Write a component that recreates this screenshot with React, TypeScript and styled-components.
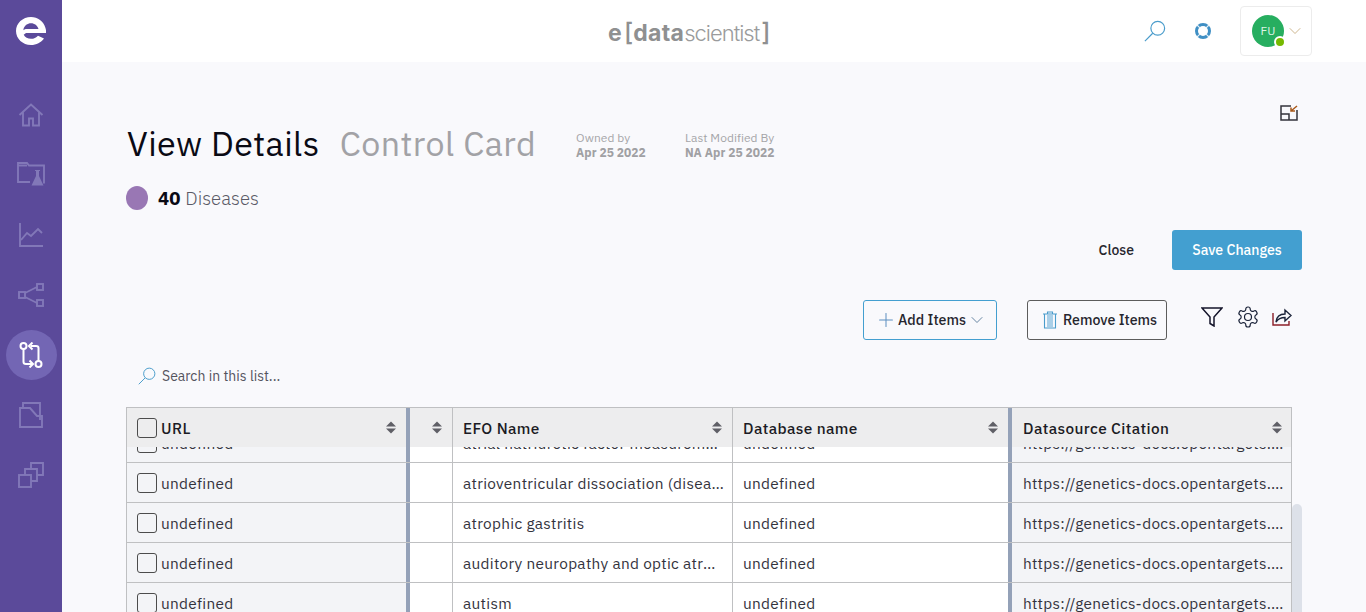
import React from 'react'
import styled, {createGlobalStyle} from 'styled-components'
import {ChevronDown, Plus} from 'lucide-react'

const font = `"IBM Plex Sans", Roboto, "Liberation Sans", sans-serif`

const GlobalStyle = createGlobalStyle`
  html, body {
    margin: 0;
    height: 100%;
    overflow: hidden;
    background: #f9f9fc;
    font-family: ${font};
  }
  * { box-sizing: border-box; }
`

const Shell = styled.div`
  display: flex;
  width: 1366px;
  height: 612px;
  overflow: hidden;
`

const Sidebar = styled.nav`
  width: 62px;
  flex: none;
  background: #5b4a9a;
  display: flex;
  flex-direction: column;
  align-items: center;
`

const LogoSlot = styled.div`
  height: 62px;
  width: 100%;
  display: flex;
  align-items: center;
  justify-content: center;
`

const NavList = styled.div`
  display: flex;
  flex-direction: column;
  align-items: center;
  gap: 10px;
  padding-top: 28px;
`

const NavItem = styled.div<{$active?: boolean}>`
  width: 51px;
  height: 50px;
  border-radius: 50%;
  display: flex;
  align-items: center;
  justify-content: center;
  background: ${p => (p.$active ? '#7366b4' : 'transparent')};
  color: ${p => (p.$active ? '#ffffff' : '#8278b8')};
`

const Content = styled.div`
  flex: 1;
  min-width: 0;
  display: flex;
  flex-direction: column;
`

const Header = styled.header`
  height: 62px;
  flex: none;
  background: #ffffff;
  display: flex;
  align-items: center;
  position: relative;
  padding-right: 54px;
  justify-content: flex-end;
`

const Brand = styled.div`
  position: absolute;
  left: 546px;
  top: 17px;
  display: flex;
  align-items: baseline;
  font-family: Inter, "Liberation Sans", sans-serif;
  font-size: 23px;
  line-height: 30px;
  color: #8f9091;
  white-space: nowrap;
`

const BrandBold = styled.span`
  font-weight: 700;
  letter-spacing: 0.3px;
`

const BrandBracket = styled.span`
  font-weight: 500;
  font-size: 25px;
  margin: 0 0 0 2px;
`

const BrandLight = styled.span`
  font-weight: 300;
  font-size: 22px;
  color: #9a9b9c;
  letter-spacing: -1px;
`

const HeaderIcon = styled.div<{$mr: number}>`
  display: flex;
  margin-right: ${p => p.$mr}px;
`

const UserBox = styled.div`
  width: 72px;
  height: 50px;
  margin-top: -1px;
  border: 1px solid #ececec;
  border-radius: 4px;
  display: flex;
  align-items: center;
  padding-left: 11px;
  color: #c4a878;
`

const Avatar = styled.div`
  position: relative;
  width: 32px;
  height: 32px;
  border-radius: 50%;
  background: #27ae60;
  color: #dff3e7;
  font-size: 12px;
  margin-right: 1px;
  display: flex;
  align-items: center;
  justify-content: center;
`

const Presence = styled.span`
  position: absolute;
  right: -2px;
  bottom: -1px;
  width: 12px;
  height: 12px;
  border-radius: 50%;
  background: #76b900;
  border: 2px solid #ffffff;
`

const Main = styled.main`
  flex: 1;
  min-height: 0;
  display: flex;
  flex-direction: column;
  padding: 0 64px 0 64px;
`

const ExpandRow = styled.div`
  display: flex;
  justify-content: flex-end;
  padding: 43px 4px 0 0;
  height: 60px;
`

const TitleRow = styled.div`
  display: flex;
  align-items: center;
  height: 42px;
  padding-left: 1px;
`

const Title = styled.h1`
  margin: 0;
  font-size: 34px;
  font-weight: 400;
  line-height: 42px;
  color: #0a0a14;
  letter-spacing: 0.42px;
`

const SubTitle = styled(Title)`
  margin-left: 20px;
  color: #a2a2a6;
`

const Meta = styled.div<{$ml: number}>`
  margin-left: ${p => p.$ml}px;
  padding-top: 4px;
  font-size: 12px;
  line-height: 15px;
  color: #a5a5a8;
  letter-spacing: 0.05px;
`

const MetaValue = styled.div`
  font-weight: 700;
  color: #a0a0a3;
`

const CountRow = styled.div`
  display: flex;
  align-items: center;
  margin-top: 22px;
  height: 24px;
  font-size: 18.6px;
  color: #5a5a66;
  font-weight: 300;
`

const Dot = styled.span`
  width: 22px;
  height: 24px;
  border-radius: 50%;
  background: #9977b4;
  margin-right: 10px;
`

const CountNumber = styled.b`
  color: #0a0a14;
  font-weight: 700;
  margin-right: 5px;
`

const ActionRow = styled.div`
  display: flex;
  justify-content: flex-end;
  align-items: center;
  margin-top: 20px;
  height: 40px;
`

const CloseButton = styled.button`
  border: 0;
  background: none;
  font: 500 14px ${font};
  color: #26262e;
  margin-right: 38px;
  padding: 0;
`

const SaveButton = styled.button`
  width: 130px;
  height: 40px;
  border: 0;
  border-radius: 3px;
  background: #439fd0;
  color: #ffffff;
  padding: 0 0 1px;
  font: 500 14.1px ${font};
`

const ToolRow = styled.div`
  display: flex;
  align-items: center;
  margin-top: 30px;
  height: 40px;
  padding-right: 10px;
`

const OutlineButton = styled.button<{$blue?: boolean; $w: number; $ml?: number; $gap: number; $pl: number}>`
  width: ${p => p.$w}px;
  height: 40px;
  margin-left: ${p => p.$ml ?? 0}px;
  border: 1px solid ${p => (p.$blue ? '#439fd0' : '#5c5c5c')};
  border-radius: 3px;
  background: none;
  display: flex;
  align-items: center;
  gap: ${p => p.$gap}px;
  font: 500 14.2px ${font};
  color: #26262e;
  padding: 0 0 1px ${p => p.$pl}px;
`

const ToolSpacer = styled.div`
  flex: 1;
`

const ToolIcons = styled.div`
  display: flex;
  align-items: center;
  margin: -6px 0 0 34px;
  gap: 12.5px;
`

const SearchRow = styled.div`
  display: flex;
  align-items: center;
  gap: 6px;
  margin-top: 27px;
  height: 18px;
  padding-left: 12px;
  font-size: 14px;
  color: #54545e;
`

const TableWrap = styled.div`
  display: flex;
  margin-top: 22px;
  flex: 1;
  min-height: 0;
`

const Table = styled.div`
  width: 1166px;
  flex: none;
  border-top: 1px solid #bfc0c2;
  border-left: 1px solid #bfc0c2;
  border-right: 1px solid #bfc0c2;
  overflow: hidden;
  position: relative;
`

const Row = styled.div`
  display: grid;
  grid-template-columns: 283px 43px 280px 279px 279px;
  height: 40px;
  border-bottom: 1px solid #bfc0c2;
`

const HeaderRow = styled(Row)`
  height: 39px;
  border-bottom: 0;
  position: relative;
  z-index: 2;
`

const Body = styled.div`
  margin-top: -24px;
`

const Cell = styled.div<{$frozen?: 'left' | 'right'; $head?: boolean}>`
  display: flex;
  align-items: center;
  min-width: 0;
  padding: 0 ${p => (p.$head ? 9 : 8)}px 0 10px;
  font-size: 15.4px;
  font-weight: ${p => (p.$head ? 500 : 400)};
  color: ${p => (p.$head ? '#1b1b24' : '#33333d')};
  letter-spacing: ${p => (p.$head ? 0.38 : 0.3)}px;
  background: ${p => (p.$head ? '#ededee' : p.$frozen ? '#f3f4f7' : '#ffffff')};
  border-right: ${p => (p.$frozen === 'left' ? '4px solid #94a1b8' : p.$frozen === 'right' ? '0' : '1px solid #bfc0c2')};
  ${p => p.$frozen === 'right' && `padding: 0 ${p.$head ? 8 : 5}px 0 11px;`}
`

const DbCell = styled(Cell)`
  border-right: 4px solid #94a1b8;
`

const CellText = styled.span`
  flex: 1;
  min-width: 0;
  white-space: nowrap;
  overflow: hidden;
  text-overflow: ellipsis;
`

const Box = styled.span`
  width: 20px;
  height: 20px;
  flex: none;
  border: 1px solid #4c4c4c;
  border-radius: 3px;
  margin-right: 4px;
`

const SortGlyph = styled.svg`
  flex: none;
  margin-top: -1px;
`

const Scrollbar = styled.div`
  width: 10px;
  flex: none;
  padding-top: 97px;
`

const Thumb = styled.div`
  height: 120px;
  background: #dde1e9;
  border-radius: 5px 5px 0 0;
`

const SortIcon = () => (
  <SortGlyph width="12" height="13" viewBox="0 0 12 13" fill="#5f5f66">
    <path d="M6 0.5 11 5.5H1Z" />
    <path d="M1 7.5H11L6 12.5Z" />
  </SortGlyph>
)

// white disc with the half moon counter and the open notch on the right
const Logo = () => (
  <svg width="30" height="28" viewBox="0 0 30 28">
    <path
      fill="#fff"
      fillRule="evenodd"
      d="M15 0C6.700 0 0 6.300 0 14s6.700 14 15 14c5.500 0 10-2.400 13-6.500l-6-2.800c-1.700 2-4.200 3.100-7 3.100-3.200 0-6-1.600-7.300-4.100l2.300-1.700H30c.2-1.900 0-3.900-.7-5.600C27.500 4.300 21.800 0 15 0ZM7.500 12C8.400 8.700 11.400 6.300 15 6.300s6.600 2.400 7.500 5.700H11c-1.600 0-2.700.400-3.500 1.200Z"
    />
  </svg>
)

const stroke = {fill: 'none', stroke: 'currentColor', strokeWidth: 1.9}

const HomeIcon = () => (
  <svg width="26" height="24" viewBox="0 0 26 24" {...stroke}>
    <path d="M1.500 12 13 1.500 24.500 12M5 9v13.500h6v-7h4v7h6V9" />
  </svg>
)

const FolderIcon = () => (
  <svg width="28" height="26" viewBox="0 0 28 26" {...stroke}>
    <path d="M13 20H1V1h9l2 2.500h15v18" />
    <path d="M1 3.500h9" />
    <path fill="currentColor" stroke="none" d="M18 8h5v1h-1v5l4.500 9.500h-12L19 14V9h-1Z" />
  </svg>
)

const ChartIcon = () => (
  <svg width="24" height="24" viewBox="0 0 24 24" {...stroke}>
    <path d="M1 0v23h23" />
    <path d="m2 17 6-7 4 3 7-7 4 4" />
  </svg>
)

const NetworkIcon = () => (
  <svg width="26" height="24" viewBox="0 0 26 24" {...stroke}>
    <rect x="1" y="9" width="6" height="6" />
    <rect x="19" y="1" width="6" height="6" />
    <rect x="19" y="17" width="6" height="6" />
    <path d="m7 10 12-6M7 14l12 6" />
  </svg>
)

const CompareIcon = () => (
  <svg width="24" height="26" viewBox="0 0 24 26" fill="none" stroke="#fff" strokeWidth="2">
    <circle cx="4.500" cy="4" r="3" />
    <circle cx="19.500" cy="22" r="3" />
    <path d="M4.500 7v13c0 1.500 1 2 2.500 2h6M10.500 18.500 14 22l-3.500 3.500" />
    <path d="M19.500 19V6c0-1.500-1-2-2.500-2h-5M13.500.5 10 4l3.500 3.500" />
  </svg>
)

const CardsIcon = () => (
  <svg width="24" height="26" viewBox="0 0 24 26" {...stroke}>
    <path d="M4 6V1h17v17" />
    <path d="M1 25V6h10l7 8h5v11Z" />
  </svg>
)

const LayersIcon = () => (
  <svg width="26" height="26" viewBox="0 0 26 26" {...stroke}>
    <rect x="1" y="13" width="12" height="12" />
    <path d="M7 13V7h12v12h-6" />
    <path d="M13 7V1h12v12h-6" />
  </svg>
)

const ExpandIcon = () => (
  <svg width="18" height="16" viewBox="0 0 18 16" fill="none" stroke="#33333b" strokeWidth="1.500">
    <path d="M11 1H1v14h16V5" />
    <path d="M1 9h8v6" />
    <path d="M17 1l-6 5M11 2.500V6h4" stroke="#a8591a" />
  </svg>
)

const MagnifierIcon = ({size}: {size: number}) => (
  <svg width={size} height={size} viewBox="0 0 24 24" fill="none" stroke="#4a9ccb" strokeWidth="1.300">
    <circle cx="15" cy="9" r="7.500" />
    <path d="M9.500 14.500 1 23" />
  </svg>
)

const BuoyIcon = () => (
  <svg width="18" height="18" viewBox="0 0 18 18" fill="none">
    <circle cx="9" cy="9" r="6.500" stroke="#3f8fc4" strokeWidth="3" />
    <path d="m3 3 3.200 3.200M15 3l-3.200 3.200M3 15l3.200-3.200M15 15l-3.200-3.200" stroke="#e6f1f8" strokeWidth="1.200" />
  </svg>
)

const TrashIcon = () => (
  <svg width="16" height="18" viewBox="0 0 16 18" fill="none" stroke="#4a9ccb" strokeWidth="1.100">
    <rect x="5" y="4" width="6" height="12" fill="#a9cfe8" stroke="none" />
    <path d="M1 3h14M5.500 3V1h5v2M2.500 3v14h11V3" />
  </svg>
)

const FunnelIcon = () => (
  <svg width="22" height="20" viewBox="0 0 22 20" fill="none" stroke="#14142a" strokeWidth="1.500">
    <path d="M1 1h20l-8 9v9l-4-2.500V10Z" />
  </svg>
)

const GearIcon = () => (
  <svg width="24" height="24" viewBox="0 0 24 24" fill="none" stroke="#1a2238" strokeWidth="1.200">
    <path d="M12.220 2h-.44a2 2 0 0 0-2 2v.18a2 2 0 0 1-1 1.730l-.43.250a2 2 0 0 1-2 0l-.150-.080a2 2 0 0 0-2.730.730l-.220.380a2 2 0 0 0 .730 2.730l.150.100a2 2 0 0 1 1 1.720v.510a2 2 0 0 1-1 1.740l-.150.090a2 2 0 0 0-.730 2.730l.220.380a2 2 0 0 0 2.730.730l.150-.080a2 2 0 0 1 2 0l.430.250a2 2 0 0 1 1 1.730V20a2 2 0 0 0 2 2h.44a2 2 0 0 0 2-2v-.18a2 2 0 0 1 1-1.730l.430-.250a2 2 0 0 1 2 0l.150.080a2 2 0 0 0 2.730-.730l.220-.390a2 2 0 0 0-.730-2.730l-.150-.080a2 2 0 0 1-1-1.740v-.500a2 2 0 0 1 1-1.740l.150-.090a2 2 0 0 0 .730-2.730l-.220-.380a2 2 0 0 0-2.730-.730l-.150.080a2 2 0 0 1-2 0l-.430-.250a2 2 0 0 1-1-1.730V4a2 2 0 0 0-2-2z" />
    <circle cx="12" cy="12" r="3.500" />
  </svg>
)

const ShareIcon = () => (
  <svg width="20" height="20" viewBox="0 0 20 20" fill="none" strokeWidth="1.400">
    <path d="M1 6v12h16v-4" stroke="#8c1f28" />
    <path d="M4 15c.5-5 4-8 9-8V3l6 5.500L13 14v-3.500c-4 0-7 1.500-9 4.500Z" stroke="#1a2238" />
  </svg>
)

const rows = [
  ['atrial natriuretic factor measurement'],
  ['atrioventricular dissociation (disease)'],
  ['atrophic gastritis'],
  ['auditory neuropathy and optic atrophy'],
  ['autism'],
]

const citation = 'https://genetics-docs.opentargets.org/our-approach'

const App = () => {
    return (
      <Shell>
          <GlobalStyle />
          <Sidebar>
              <LogoSlot><Logo /></LogoSlot>
              <NavList>
                  <NavItem><HomeIcon /></NavItem>
                  <NavItem><FolderIcon /></NavItem>
                  <NavItem><ChartIcon /></NavItem>
                  <NavItem><NetworkIcon /></NavItem>
                  <NavItem $active><CompareIcon /></NavItem>
                  <NavItem><CardsIcon /></NavItem>
                  <NavItem><LayersIcon /></NavItem>
              </NavList>
          </Sidebar>
          <Content>
              <Header>
                  <Brand>
                      <BrandBold>e</BrandBold>
                      <BrandBracket>[</BrandBracket>
                      <BrandBold>data</BrandBold>
                      <BrandLight>scientist</BrandLight>
                      <BrandBracket>]</BrandBracket>
                  </Brand>
                  <HeaderIcon $mr={28}><MagnifierIcon size={22} /></HeaderIcon>
                  <HeaderIcon $mr={28}><BuoyIcon /></HeaderIcon>
                  <UserBox>
                      <Avatar>FU<Presence /></Avatar>
                      <ChevronDown size={20} strokeWidth={1} />
                  </UserBox>
              </Header>
              <Main>
                  <ExpandRow><ExpandIcon /></ExpandRow>
                  <TitleRow>
                      <Title>View Details</Title>
                      <SubTitle>Control Card</SubTitle>
                      <Meta $ml={40}>Owned by<MetaValue>Apr 25 2022</MetaValue></Meta>
                      <Meta $ml={39}>Last Modified By<MetaValue>NA Apr 25 2022</MetaValue></Meta>
                  </TitleRow>
                  <CountRow><Dot /><CountNumber>40</CountNumber>Diseases</CountRow>
                  <ActionRow>
                      <CloseButton>Close</CloseButton>
                      <SaveButton>Save Changes</SaveButton>
                  </ActionRow>
                  <ToolRow>
                      <ToolSpacer />
                      <OutlineButton $blue $w={134} $gap={1} $pl={11}>
                          <Plus size={22} strokeWidth={1.1} color="#5d8fc0" />Add Items<ChevronDown size={20} strokeWidth={1} color="#4a6f90" />
                      </OutlineButton>
                      <OutlineButton $w={140} $ml={30} $gap={5} $pl={14}>
                          <TrashIcon />Remove Items
                      </OutlineButton>
                      <ToolIcons>
                          <FunnelIcon />
                          <GearIcon />
                          <ShareIcon />
                      </ToolIcons>
                  </ToolRow>
                  <SearchRow><MagnifierIcon size={18} />Search in this list...</SearchRow>
                  <TableWrap>
                      <Table>
                          <HeaderRow>
                              <Cell $head $frozen="left"><Box /><CellText>URL</CellText><SortIcon /></Cell>
                              <Cell $head><CellText /><SortIcon /></Cell>
                              <Cell $head><CellText>EFO Name</CellText><SortIcon /></Cell>
                              <DbCell $head><CellText>Database name</CellText><SortIcon /></DbCell>
                              <Cell $head $frozen="right"><CellText>Datasource Citation</CellText><SortIcon /></Cell>
                          </HeaderRow>
                          <Body>
                              {rows.map(([name]) => (
                                <Row key={name}>
                                    <Cell $frozen="left"><Box /><CellText>undefined</CellText></Cell>
                                    <Cell />
                                    <Cell><CellText>{name}</CellText></Cell>
                                    <DbCell><CellText>undefined</CellText></DbCell>
                                    <Cell $frozen="right"><CellText>{citation}</CellText></Cell>
                                </Row>
                              ))}
                          </Body>
                      </Table>
                      <Scrollbar><Thumb /></Scrollbar>
                  </TableWrap>
              </Main>
          </Content>
      </Shell>
    )
}

export default App
